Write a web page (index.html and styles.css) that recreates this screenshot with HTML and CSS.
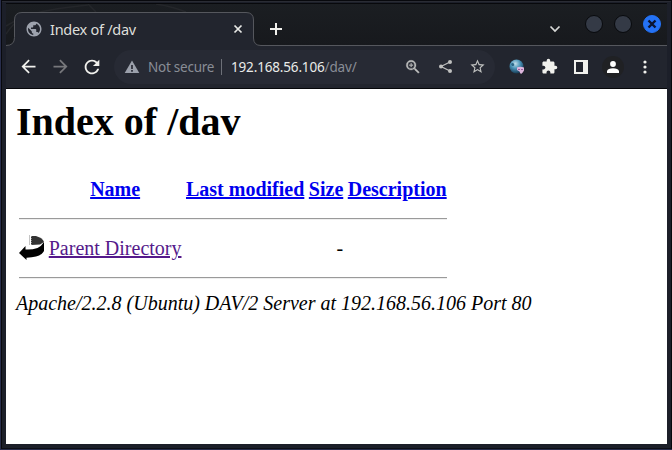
FILE: index.html
```html
<!DOCTYPE html>
<html lang="en">
<head>
<meta charset="utf-8">
<title>Index of /dav</title>
<link rel="stylesheet" href="styles.css">
</head>
<body>
<div class="window">
  <header class="tabstrip">
    <svg class="tabshape" width="661" height="42" viewBox="0 0 661 42">
      <g fill="none" stroke="#24262a" stroke-width="1.5"><path d="M0 22C28 5 58 4 82 1M82 0l8 8M150 0q18 3 30 8M0 30q4-6 8-10"/></g>
      <path d="M0 42V41.500Q8.500 41.500 8.500 33.500V16Q8.500 8.500 16 8.500H240Q247.500 8.500 247.500 16V34Q247.500 41.500 255 41.500H661V42Z" fill="#22252e"/>
      <path d="M0 41.500Q8.500 41.500 8.500 33.500V16Q8.500 8.500 16 8.500H240Q247.500 8.500 247.500 16V34Q247.500 41.500 255 41.500H661" fill="none" stroke="#55575d"/>
    </svg>
    <div class="tab">
      <svg width="18" height="18" viewBox="0 0 24 24" fill="#9da2ad"><path d="M12 2C6.480 2 2 6.480 2 12s4.480 10 10 10 10-4.480 10-10S17.520 2 12 2zm-1 17.930c-3.950-.490-7-3.850-7-7.930 0-.620.080-1.210.210-1.790L9 15v1c0 1.100.900 2 2 2v1.930zm6.900-2.540c-.260-.810-1-1.390-1.900-1.390h-1v-3c0-.550-.450-1-1-1H8v-2h2c.550 0 1-.450 1-1V7h2c1.100 0 2-.900 2-2v-.410c2.930 1.190 5 4.060 5 7.410 0 2.080-.800 3.970-2.100 5.390z"/></svg>
      <span class="tab-title">Index of /dav</span>
      <svg class="close" width="10" height="10" viewBox="0 0 10 10"><path d="M1.500 1.500l7 7M8.500 1.500l-7 7" stroke="#e8e9e6" stroke-width="1.700"/></svg>
    </div>
    <svg class="plus" width="12" height="12" viewBox="0 0 12 12"><path d="M6 0v12M0 6h12" stroke="#f1f1ed" stroke-width="2"/></svg>
    <svg class="chev" width="12" height="8" viewBox="0 0 12 8"><path d="M1.500 1.500L6 6l4.500-4.500" fill="none" stroke="#d8d9d7" stroke-width="1.700"/></svg>
    <span class="knob"></span>
    <span class="knob"></span>
    <span class="knob knob-close"><svg width="10" height="10" viewBox="0 0 10 10"><path d="M1.500 1.500l7 7M8.500 1.500l-7 7" stroke="#0b1430" stroke-width="2.400"/></svg></span>
  </header>

  <nav class="toolbar">
    <span class="btn"><svg width="21" height="21" viewBox="0 0 24 24" fill="#f1f1ed"><path d="M20 11H7.830l5.590-5.590L12 4l-8 8 8 8 1.410-1.410L7.830 13H20v-2z"/></svg></span>
    <span class="btn"><svg width="21" height="21" viewBox="0 0 24 24" fill="#77787c"><path d="M12 4l-1.410 1.410L16.170 11H4v2h12.170l-5.580 5.590L12 20l8-8z"/></svg></span>
    <span class="btn"><svg width="22" height="22" viewBox="0 0 24 24" fill="#f1f1ed"><path d="M17.650 6.350C16.200 4.900 14.210 4 12 4c-4.420 0-7.990 3.580-7.990 8s3.570 8 7.990 8c3.730 0 6.840-2.550 7.730-6h-2.080c-.820 2.330-3.040 4-5.650 4-3.310 0-6-2.690-6-6s2.690-6 6-6c1.660 0 3.140.690 4.220 1.780L13 11h7V4l-2.350 2.350z"/></svg></span>
    <div class="omnibox">
      <svg class="warn" width="16" height="14" viewBox="0 0 16 14"><path d="M8 .5L15.300 13H.7z" fill="#9ba0ab"/><path d="M8 5v4M8 10v1.700" stroke="#272a34" stroke-width="1.700"/></svg>
      <span class="insecure">Not secure</span>
      <span class="sep"></span>
      <span class="url">192.168.56.106<span class="path">/dav/</span></span>
      <span class="btn"><svg width="18" height="18" viewBox="0 0 24 24" fill="#bfc0bf"><path d="M15.500 14h-.79l-.28-.27A6.470 6.470 0 0 0 16 9.500 6.500 6.500 0 1 0 9.500 16c1.610 0 3.090-.590 4.230-1.570l.27.280v.790l5 4.990L20.490 19l-4.990-5zm-6 0a4.500 4.500 0 1 1 0-9 4.500 4.500 0 0 1 0 9zM12 10h-2v2H9v-2H7V9h2V7h1v2h2v1z" stroke="#bfc0bf" stroke-width=".4"/></svg></span>
      <span class="btn"><svg width="15" height="15" viewBox="0 0 15 15"><path d="M12 3L3 7.500 12 12" fill="none" stroke="#bfc0bf" stroke-width="1.200"/><g fill="#bfc0bf"><circle cx="12" cy="2.900" r="2"/><circle cx="3" cy="7.500" r="2"/><circle cx="12" cy="12.100" r="2"/></g></svg></span>
      <span class="btn"><svg width="17" height="17" viewBox="0 0 24 24" fill="#bfc0bf"><path d="M22 9.240l-7.190-.620L12 2 9.190 8.630 2 9.240l5.460 4.730L5.820 21 12 17.270 18.180 21l-1.630-7.030L22 9.240zM12 15.400l-3.760 2.270 1-4.280-3.320-2.880 4.380-.380L12 6.100l1.710 4.040 4.380.380-3.320 2.880 1 4.280L12 15.400z"/></svg></span>
    </div>
    <span class="btn"><svg width="16" height="16" viewBox="0 0 16 16"><defs><radialGradient id="globe" cx=".42" cy=".3" r=".75"><stop offset="0" stop-color="#c0deea"/><stop offset=".45" stop-color="#4b94b8"/><stop offset="1" stop-color="#102f48"/></radialGradient></defs><circle cx="7.500" cy="7.500" r="7" fill="url(#globe)"/><path d="M2 5q2-2 3 0t-2 2z" fill="#2b6687"/><path d="M8 8.500q3-1.500 7 0v3q-1 2-3 3.500-1-1-1.500-2.500L8 11z" fill="#dcb6dc"/><path d="M9 10.500h2M12 10.500h2" stroke="#9c5e9c"/></svg></span>
    <span class="btn"><svg width="17" height="17" viewBox="0 0 24 24" fill="#f1f1ed"><path d="M20.500 11H19V7c0-1.100-.900-2-2-2h-4V3.500a2.500 2.500 0 0 0-5 0V5H4c-1.100 0-1.990.900-1.990 2v3.800H3.500c1.490 0 2.700 1.210 2.700 2.700s-1.210 2.700-2.700 2.700H2V20c0 1.100.900 2 2 2h3.800v-1.500c0-1.490 1.210-2.700 2.700-2.700s2.700 1.210 2.700 2.700V22H17c1.100 0 2-.900 2-2v-4h1.500a2.500 2.500 0 0 0 0-5z"/></svg></span>
    <span class="btn"><svg width="14" height="14" viewBox="0 0 14 14"><path d="M0 0h14v14H0zM2 2v10h7V2z" fill="#f1f1ed" fill-rule="evenodd"/></svg></span>
    <span class="btn"><span class="avatar"><svg width="12" height="12" viewBox="0 0 12 12" fill="#fff"><circle cx="6" cy="3" r="2.900"/><path d="M0 12V10Q1 7.300 6 7.300T12 10V12z"/></svg></span></span>
    <span class="btn"><svg width="4" height="14" viewBox="0 0 4 14" fill="#f1f1ed"><circle cx="2" cy="2" r="1.600"/><circle cx="2" cy="7" r="1.600"/><circle cx="2" cy="12" r="1.600"/></svg></span>
  </nav>

  <main class="page">
    <h1>Index of /dav</h1>
    <table>
      <tr><th><span class="icon-space"></span></th><th class="name"><a href="#">Name</a></th><th><a href="#">Last modified</a></th><th><a href="#">Size</a></th><th><a href="#">Description</a></th></tr>
      <tr><th colspan="5"><hr></th></tr>
      <tr><td class="icon-cell"><svg class="back" width="25" height="27" viewBox="0 0 25 27"><path d="M12 1h5q7 2 8 6l-4 2.500-9 .5z" fill="#333"/><path d="M10.500.5v10M12.500 1v9" stroke="#888" stroke-dasharray="1 1"/><path d="M0 18l6.500-7v3.500q6 .5 12-1.500 4-2 6.500-6v9q-2 4-8 5.500-4 1-9.500 1.200V25z" fill="#000"/></svg></td><td><a class="visited" href="#">Parent Directory</a></td><td></td><td class="size">&nbsp; - </td><td></td></tr>
      <tr><th colspan="5"><hr></th></tr>
    </table>
    <address>Apache/2.2.8 (Ubuntu) DAV/2 Server at 192.168.56.106 Port 80</address>
  </main>
</div>
</body>
</html>
```
FILE: styles.css
```css
* { box-sizing: border-box; }
html, body { margin: 0; height: 100%; overflow: hidden; }
body {
  background: #282d4b;
  padding: 0 0 1px 1px;
}
svg { display: block; flex: none; }
.window {
  height: 449px;
  display: flex;
  flex-direction: column;
  background: #1c1f29;
  border: 1px solid #08090d;
  border-bottom-color: #0c0e16;
  padding: 2px 4px 4px 4px;
  box-shadow: inset 0 1px #2a2c34;
}
.tabstrip {
  position: relative;
  height: 43px;
  flex: none;
  display: flex;
  align-items: center;
  background: linear-gradient(#1b1e22, #17191d);
  border-top: 1px solid #08090c;
  font: 14.5px "Noto Sans", sans-serif;
  color: #dedfda;
}
.tabshape { position: absolute; left: 0; top: 0; }
.tab {
  position: relative;
  width: 248px;
  height: 33px;
  margin-top: 8px;
  padding: 0 11px 0 19px;
  display: flex;
  align-items: center;
}
.tab-title { margin: -1px 0 0 7px; letter-spacing: -0.28px; }
.close { margin-left: auto; }
.plus { position: relative; margin: 8px 0 0 16px; }
.chev { position: relative; margin: 8px 24px 0 auto; }
.knob {
  position: relative;
  width: 18px;
  height: 18px;
  margin: -3px 11px 0 0;
  border-radius: 50%;
  background: #343a46;
  border: 1px solid #080a0d;
  flex: none;
}
.knob-close {
  display: flex;
  align-items: center;
  justify-content: center;
  margin-right: 6px;
  background: #2472f5;
  border-color: #2472f5;
}
.toolbar {
  height: 43px;
  flex: none;
  display: flex;
  align-items: center;
  padding: 0 0 1px 6px;
  background: #22252e;
  border-bottom: 1px solid #06070a;
  font: 13.5px "Noto Sans", sans-serif;
}
.btn {
  width: 32px;
  height: 32px;
  flex: none;
  display: flex;
  align-items: center;
  justify-content: center;
}
.omnibox {
  width: 381px;
  height: 34px;
  margin: 0 6px;
  padding: 0 2px 0 10px;
  display: flex;
  align-items: center;
  border-radius: 17px;
  background: #272a34;
  color: #e9eae8;
}
.insecure { width: 66px; margin-left: 8px; color: #898d96; white-space: nowrap; letter-spacing: -0.24px; }
.sep { width: 1px; height: 16px; margin: 0 9px 0 7px; background: #6d7078; }
.url { flex: 1; white-space: nowrap; letter-spacing: -0.16px; }
.path { color: #898d96; }
.avatar {
  width: 22px;
  height: 22px;
  display: flex;
  align-items: center;
  justify-content: center;
  border-radius: 50%;
  background: #202124;
}
.page {
  flex: 1;
  padding: 10px 10px 0;
  background: #fff;
  color: #000;
  font: 20px "Liberation Serif", serif;
}
.page h1 { margin: 0 0 27.8px; font-size: 40px; line-height: 46px; }
table { border-spacing: 2.5px; margin-right: -10px; white-space: nowrap; }
th, td { padding: 1.25px; }
.icon-space { display: block; width: 25px; height: 27.5px; }
.icon-cell { height: 30.5px; }
.name { width: 135px; }
.size { text-align: right; }
hr {
  height: 2px;
  margin: 10px 0;
  border: 0;
  border-top: 1px solid #9a9a9a;
  border-bottom: 1px solid #eee;
}
a { color: #0000ee; }
a.visited { color: #551a8b; }
address { font-style: italic; }
```
